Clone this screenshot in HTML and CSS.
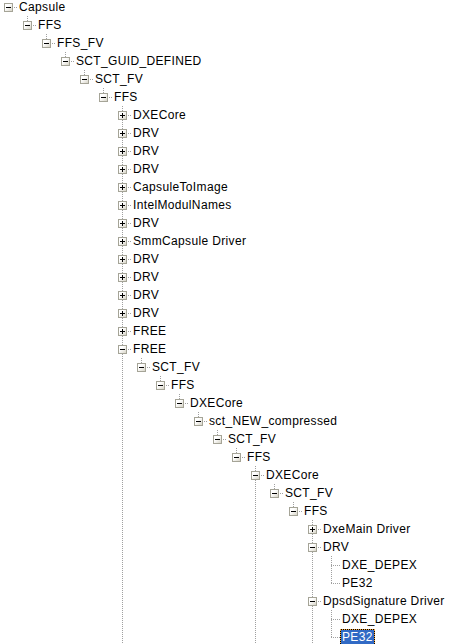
FILE: index.html
```html
<!DOCTYPE html>
<html lang="en">
<head>
    <meta charset="UTF-8">
    <title>Capsule tree</title>
    <link rel="stylesheet" href="styles.css">
</head>
<body>
    <ul class="tree">
        <li class="root">
            <div class="item"><span class="twist"><i class="box minus"></i></span><span class="label">Capsule</span></div>
            <ul>
                <li class="last">
                    <div class="item"><span class="twist"><i class="box minus"></i></span><span class="label">FFS</span></div>
                    <ul>
                        <li class="last">
                            <div class="item"><span class="twist"><i class="box minus"></i></span><span class="label">FFS_FV</span></div>
                            <ul>
                                <li class="last">
                                    <div class="item"><span class="twist"><i class="box minus"></i></span><span class="label">SCT_GUID_DEFINED</span></div>
                                    <ul>
                                        <li class="last">
                                            <div class="item"><span class="twist"><i class="box minus"></i></span><span class="label">SCT_FV</span></div>
                                            <ul>
                                                <li class="last">
                                                    <div class="item"><span class="twist"><i class="box minus"></i></span><span class="label">FFS</span></div>
                                                    <ul>
                                                        <li><div class="item"><span class="twist"><i class="box plus"></i></span><span class="label">DXECore</span></div></li>
                                                        <li><div class="item"><span class="twist"><i class="box plus"></i></span><span class="label">DRV</span></div></li>
                                                        <li><div class="item"><span class="twist"><i class="box plus"></i></span><span class="label">DRV</span></div></li>
                                                        <li><div class="item"><span class="twist"><i class="box plus"></i></span><span class="label">DRV</span></div></li>
                                                        <li><div class="item"><span class="twist"><i class="box plus"></i></span><span class="label">CapsuleToImage</span></div></li>
                                                        <li><div class="item"><span class="twist"><i class="box plus"></i></span><span class="label">IntelModulNames</span></div></li>
                                                        <li><div class="item"><span class="twist"><i class="box plus"></i></span><span class="label">DRV</span></div></li>
                                                        <li><div class="item"><span class="twist"><i class="box plus"></i></span><span class="label">SmmCapsule Driver</span></div></li>
                                                        <li><div class="item"><span class="twist"><i class="box plus"></i></span><span class="label">DRV</span></div></li>
                                                        <li><div class="item"><span class="twist"><i class="box plus"></i></span><span class="label">DRV</span></div></li>
                                                        <li><div class="item"><span class="twist"><i class="box plus"></i></span><span class="label">DRV</span></div></li>
                                                        <li><div class="item"><span class="twist"><i class="box plus"></i></span><span class="label">DRV</span></div></li>
                                                        <li><div class="item"><span class="twist"><i class="box plus"></i></span><span class="label">FREE</span></div></li>
                                                        <li>
                                                            <div class="item"><span class="twist"><i class="box minus"></i></span><span class="label">FREE</span></div>
                                                            <ul>
                                                                <li class="last">
                                                                    <div class="item"><span class="twist"><i class="box minus"></i></span><span class="label">SCT_FV</span></div>
                                                                    <ul>
                                                                        <li class="last">
                                                                            <div class="item"><span class="twist"><i class="box minus"></i></span><span class="label">FFS</span></div>
                                                                            <ul>
                                                                                <li class="last">
                                                                                    <div class="item"><span class="twist"><i class="box minus"></i></span><span class="label">DXECore</span></div>
                                                                                    <ul>
                                                                                        <li class="last">
                                                                                            <div class="item"><span class="twist"><i class="box minus"></i></span><span class="label">sct_NEW_compressed</span></div>
                                                                                            <ul>
                                                                                                <li class="last">
                                                                                                    <div class="item"><span class="twist"><i class="box minus"></i></span><span class="label">SCT_FV</span></div>
                                                                                                    <ul>
                                                                                                        <li class="last">
                                                                                                            <div class="item"><span class="twist"><i class="box minus"></i></span><span class="label">FFS</span></div>
                                                                                                            <ul>
                                                                                                                <li>
                                                                                                                    <div class="item"><span class="twist"><i class="box minus"></i></span><span class="label">DXECore</span></div>
                                                                                                                    <ul>
                                                                                                                        <li class="last">
                                                                                                                            <div class="item"><span class="twist"><i class="box minus"></i></span><span class="label">SCT_FV</span></div>
                                                                                                                            <ul>
                                                                                                                                <li class="last">
                                                                                                                                    <div class="item"><span class="twist"><i class="box minus"></i></span><span class="label">FFS</span></div>
                                                                                                                                    <ul>
                                                                                                                                        <li><div class="item"><span class="twist"><i class="box plus"></i></span><span class="label">DxeMain Driver</span></div></li>
                                                                                                                                        <li>
                                                                                                                                            <div class="item"><span class="twist"><i class="box minus"></i></span><span class="label">DRV</span></div>
                                                                                                                                            <ul>
                                                                                                                                                <li><div class="item"><span class="twist"></span><span class="label">DXE_DEPEX</span></div></li>
                                                                                                                                                <li class="last"><div class="item"><span class="twist"></span><span class="label">PE32</span></div></li>
                                                                                                                                            </ul>
                                                                                                                                        </li>
                                                                                                                                        <li>
                                                                                                                                            <div class="item"><span class="twist"><i class="box minus"></i></span><span class="label">DpsdSignature Driver</span></div>
                                                                                                                                            <ul>
                                                                                                                                                <li><div class="item"><span class="twist"></span><span class="label">DXE_DEPEX</span></div></li>
                                                                                                                                                <li class="last"><div class="item"><span class="twist"></span><span class="label selected">PE32</span></div></li>
                                                                                                                                            </ul>
                                                                                                                                        </li>
                                                                                                                                    </ul>
                                                                                                                                </li>
                                                                                                                            </ul>
                                                                                                                        </li>
                                                                                                                    </ul>
                                                                                                                </li>
                                                                                                            </ul>
                                                                                                        </li>
                                                                                                    </ul>
                                                                                                </li>
                                                                                            </ul>
                                                                                        </li>
                                                                                    </ul>
                                                                                </li>
                                                                            </ul>
                                                                        </li>
                                                                    </ul>
                                                                </li>
                                                            </ul>
                                                        </li>
                                                    </ul>
                                                </li>
                                            </ul>
                                        </li>
                                    </ul>
                                </li>
                            </ul>
                        </li>
                    </ul>
                </li>
            </ul>
        </li>
    </ul>
</body>
</html>
```

FILE: styles.css
```css
html, body {
    margin: 0;
    height: 100%;
    overflow: hidden;
    background: #fff;
}

body {
    font-family: 'Liberation Sans', Arial, sans-serif;
    font-size: 12px;
    letter-spacing: 0.35px;
    color: #000;
}

.tree,
.tree ul {
    list-style: none;
    margin: 0;
    padding: 0;
}

.tree {
    margin-top: -2px;
}

.tree ul {
    padding-left: 19px;
}

/* vertical dotted line: full height for items with a next sibling */
.tree li {
    background: repeating-linear-gradient(to bottom, #a0a0a0 0 1px, transparent 1px 2px) 8px 0 / 1px 100% no-repeat;
}

.tree li.last {
    background-size: 1px 10px;
}

.tree li.root {
    background: none;
}

.item {
    display: flex;
    align-items: center;
    height: 18px;
    white-space: nowrap;
}

/* horizontal dotted connector */
.twist {
    display: block;
    flex: none;
    width: 17px;
    height: 18px;
    background: repeating-linear-gradient(to right, #a0a0a0 0 1px, transparent 1px 2px) 8px 9px / 9px 1px no-repeat;
}

.box {
    display: block;
    width: 9px;
    height: 9px;
    margin: 5px 0 0 4px;
    box-sizing: border-box;
    border: 1px solid #a5a497;
    background: linear-gradient(135deg, #fff 35%, #d8d5c8);
}

.box.minus {
    background:
        linear-gradient(#000, #000) center / 5px 1px no-repeat,
        linear-gradient(135deg, #fff 35%, #d8d5c8);
}

.box.plus {
    background:
        linear-gradient(#000, #000) center / 5px 1px no-repeat,
        linear-gradient(#000, #000) center / 1px 5px no-repeat,
        linear-gradient(135deg, #fff 35%, #d8d5c8);
}

.label {
    display: block;
    padding: 0 1px;
    line-height: 14px;
    border: 1px solid transparent;
}

.label.selected {
    color: #fff;
    border: 1px dotted #f2a33a;
    background: linear-gradient(#316ac5, #316ac5) padding-box, #000;
}
```
